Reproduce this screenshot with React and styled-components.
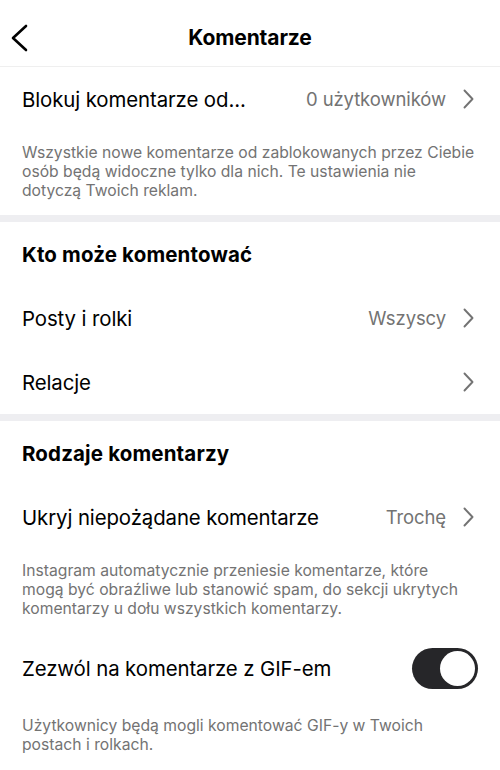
import React from "react";
import styled, { createGlobalStyle } from "styled-components";

const Global = createGlobalStyle`
  html, body {
    margin: 0;
    padding: 0;
    background: #ffffff;
  }
  body {
    font-family: Inter, "Noto Sans", "Liberation Sans", sans-serif;
    color: #000;
    -webkit-font-smoothing: antialiased;
  }
`;

const Screen = styled.div`
  width: 500px;
  min-height: 770px;
  background: #fff;
  display: flex;
  flex-direction: column;
`;

const Header = styled.header`
  height: 67px;
  padding-top: 9px;
  border-bottom: 1px solid #efefef;
  display: grid;
  grid-template-columns: 60px 1fr 60px;
  align-items: center;
  box-sizing: border-box;
`;

const BackButton = styled.button`
  border: 0;
  background: none;
  padding: 0 0 0 10px;
  height: 100%;
  display: flex;
  align-items: center;
  cursor: pointer;
`;

const Title = styled.h1`
  margin: 0;
  font-size: 21px;
  font-weight: 700;
  text-align: center;
  letter-spacing: -0.1px;
`;

const Row = styled.div`
  height: ${(p) => p.$height || 64}px;
  padding: 0 22px;
  display: flex;
  align-items: center;
  justify-content: space-between;
  box-sizing: border-box;
`;

const Label = styled.span`
  font-size: ${(p) => (p.$bold ? 20.5 : 20.4)}px;
  font-weight: ${(p) => (p.$bold ? 700 : 400)};
  letter-spacing: ${(p) => (p.$bold ? "0.15px" : "-0.1px")};
`;

const Trail = styled.div`
  display: flex;
  align-items: center;
  gap: 17px;
  margin-right: 4px;
`;

const Value = styled.span`
  font-size: 18.5px;
  color: #737373;
  letter-spacing: -0.1px;
`;

const Note = styled.p`
  margin: 0;
  padding: ${(p) => p.$pad || "12px 22px 15px"};
  font-size: 15.7px;
  line-height: 19px;
  color: #737373;
  white-space: pre-line;
`;

const Divider = styled.div`
  height: 7px;
  background: #eeeef1;
`;

const Track = styled.div`
  width: 66px;
  height: 41px;
  border-radius: 21px;
  background: ${(p) => (p.$on ? "#262629" : "#e5e5ea")};
  padding: 3px;
  box-sizing: border-box;
  display: flex;
  justify-content: ${(p) => (p.$on ? "flex-end" : "flex-start")};
`;

const Knob = styled.div`
  width: 35px;
  height: 35px;
  border-radius: 50%;
  background: #fff;
`;

const Chevron = () => (
  <svg width="11" height="20" viewBox="0 0 11 20" fill="none">
    <polyline
      points="1.5,1.5 9.5,10 1.5,18.5"
      stroke="#737373"
      strokeWidth="1.9"
      strokeLinecap="round"
      strokeLinejoin="round"
    />
  </svg>
);

const BackIcon = () => (
  <svg width="20" height="28" viewBox="0 0 20 28" fill="none">
    <polyline
      points="16,2 3,14 16,26"
      stroke="#000"
      strokeWidth="2.6"
      strokeLinecap="round"
      strokeLinejoin="round"
    />
  </svg>
);

function LinkRow({ label, value }) {
  return (
    <Row>
      <Label>{label}</Label>
      <Trail>
        {value && <Value>{value}</Value>}
        <Chevron />
      </Trail>
    </Row>
  );
}

export default function App() {
  return (
    <Screen>
      <Global />
      <Header>
        <BackButton aria-label="Wstecz">
          <BackIcon />
        </BackButton>
        <Title>Komentarze</Title>
        <span />
      </Header>

      <LinkRow label="Blokuj komentarze od..." value="0 użytkowników" />
      <Note>
        {"Wszystkie nowe komentarze od zablokowanych przez Ciebie\nosób będą widoczne tylko dla nich. Te ustawienia nie\ndotyczą Twoich reklam."}
      </Note>
      <Divider />

      <Row>
        <Label $bold>Kto może komentować</Label>
      </Row>
      <LinkRow label="Posty i rolki" value="Wszyscy" />
      <LinkRow label="Relacje" />
      <Divider />

      <Row>
        <Label $bold>Rodzaje komentarzy</Label>
      </Row>
      <LinkRow label="Ukryj niepożądane komentarze" value="Trochę" />
      <Note $pad="12px 22px 16px">
        {"Instagram automatycznie przeniesie komentarze, które\nmogą być obraźliwe lub stanowić spam, do sekcji ukrytych\nkomentarzy u dołu wszystkich komentarzy."}
      </Note>
      <Row $height={68}>
        <Label>Zezwól na komentarze z GIF-em</Label>
        <Track $on>
          <Knob />
        </Track>
      </Row>
      <Note $pad="14px 22px 16px">
        {"Użytkownicy będą mogli komentować GIF-y w Twoich\npostach i rolkach."}
      </Note>
    </Screen>
  );
}
